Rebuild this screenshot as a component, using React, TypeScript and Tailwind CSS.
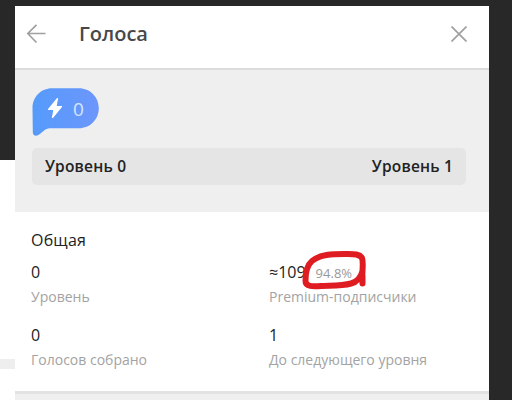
type Stat = {
  value: string;
  label: string;
  percent?: string;
};

const stats: Stat[] = [
  { value: "0", label: "Уровень" },
  { value: "≈109", label: "Premium-подписчики", percent: "94.8%" },
  { value: "0", label: "Голосов собрано" },
  { value: "1", label: "До следующего уровня" },
];

function BackIcon() {
  return (
    <svg width="20" height="20" viewBox="0 0 20 20" fill="none" stroke="#a0a0a0" strokeWidth="1.7">
      <path d="M19.5 9.500H1.800M10.500 0.800L1.800 9.500L10.500 18.500" />
    </svg>
  );
}

function CloseIcon() {
  return (
    <svg width="16" height="16" viewBox="0 0 16 16" fill="none" stroke="#a0a0a0" strokeWidth="1.7">
      <path d="M0.5 0.5L15.5 15.5M15.5 0.5L0.5 15.5" />
    </svg>
  );
}

function BoostBadge() {
  return (
    <div className="relative h-[48px] w-[67px]">
      <svg className="absolute inset-0" width="67" height="48" viewBox="0 0 67 48">
        <defs>
          <linearGradient id="boost" x1="0" y1="0" x2="1" y2="0">
            <stop offset="0" stopColor="#559bfb" />
            <stop offset="1" stopColor="#6d96fb" />
          </linearGradient>
        </defs>
        <path
          d="M20 0.300H47C58 0.300 66.800 9 66.800 20.300S58 40.300 47 40.300H18C13 40.300 10 45 6 47.200C3 48.500 0.800 47 0.800 44.500L0.500 20C0.500 9 9 0.300 20 0.300Z"
          fill="url(#boost)"
        />
        <path
          d="M25.500 10.500L16.500 21.500H22L20.500 29.500L29.500 18.500H24Z"
          fill="#fff"
          stroke="#fff"
          strokeWidth="1.200"
          strokeLinejoin="round"
        />
      </svg>
      <span className="absolute left-[41px] top-0 text-[19px] leading-[42px] text-[#d5e6ff]">0</span>
    </div>
  );
}

function StatCell({ stat }: { stat: Stat }) {
  return (
    <div className="h-[63px]">
      <div className="relative flex h-[24px] items-baseline text-[16px] leading-[24px] text-[#222]">
        <span>{stat.value}</span>
        {stat.percent && (
          <>
            <span className="ml-[10px] text-[13px] text-[#999]">{stat.percent}</span>
            <svg
              className="absolute left-[32px] top-[-10px]"
              width="68"
              height="40"
              viewBox="0 0 68 40"
              fill="none"
              stroke="#df1c22"
              strokeWidth="6"
              strokeLinecap="round"
              strokeLinejoin="round"
            >
              <path d="M61.500 33.500V26M61.500 31C60.500 24 63 13 61 8C58.500 3.500 52 4 44 4C31 4 19 4.500 11 11C5 16 4.500 24 4.500 31C4.500 37 12 36.500 20 36C31 35.500 41 36 50 33.500C56 32 60 27 61.500 21" />
            </svg>
          </>
        )}
      </div>
      <div className="text-[14px] leading-[26px] text-[#a3a3a3]">{stat.label}</div>
    </div>
  );
}

export default function App() {
  return (
    <div className="flex h-[400px] w-[512px] overflow-hidden bg-[#282828] font-['Open_Sans','Noto_Sans',sans-serif]">
      <div className="flex w-[15px] shrink-0 flex-col pt-[160px]">
        <div className="h-[199px] bg-white" />
        <div className="h-[10px] bg-[#eeeeee]" />
        <div className="flex-1 bg-white" />
      </div>

      <main className="mt-[6px] flex w-[474px] shrink-0 flex-col bg-white">
        <header className="flex h-[64px] shrink-0 items-center border-b-2 border-[#dcdcdc] pl-[11px] pr-[22px] pb-[6px]">
          <BackIcon />
          <h1 className="ml-[33px] flex-1 text-[20px] font-semibold leading-[26px] text-[#484848]">Голоса</h1>
          <CloseIcon />
        </header>

        <section className="h-[142px] shrink-0 bg-[#efefef] px-[17px] pt-[18px]">
          <BoostBadge />
          <div className="mt-[12px] flex h-[37px] w-[434px] items-center justify-between rounded-[5px] bg-[#e5e5e5] px-[13px] text-[15.500px] font-semibold tracking-[0.18px] text-[#222]">
            <span>Уровень 0</span>
            <span>Уровень 1</span>
          </div>
        </section>

        <section className="h-[179px] shrink-0 px-[16px] pt-[16px]">
          <h2 className="text-[16px] leading-[24px] tracking-[0.2px] text-[#222]">Общая</h2>
          <div className="mt-[8px] grid grid-cols-[238px_1fr]">
            {stats.map((stat) => (
              <StatCell key={stat.label} stat={stat} />
            ))}
          </div>
        </section>

        <div className="flex-1 border-t-3 border-[#e2e2e2] bg-[#efefef]" />
      </main>
    </div>
  );
}
